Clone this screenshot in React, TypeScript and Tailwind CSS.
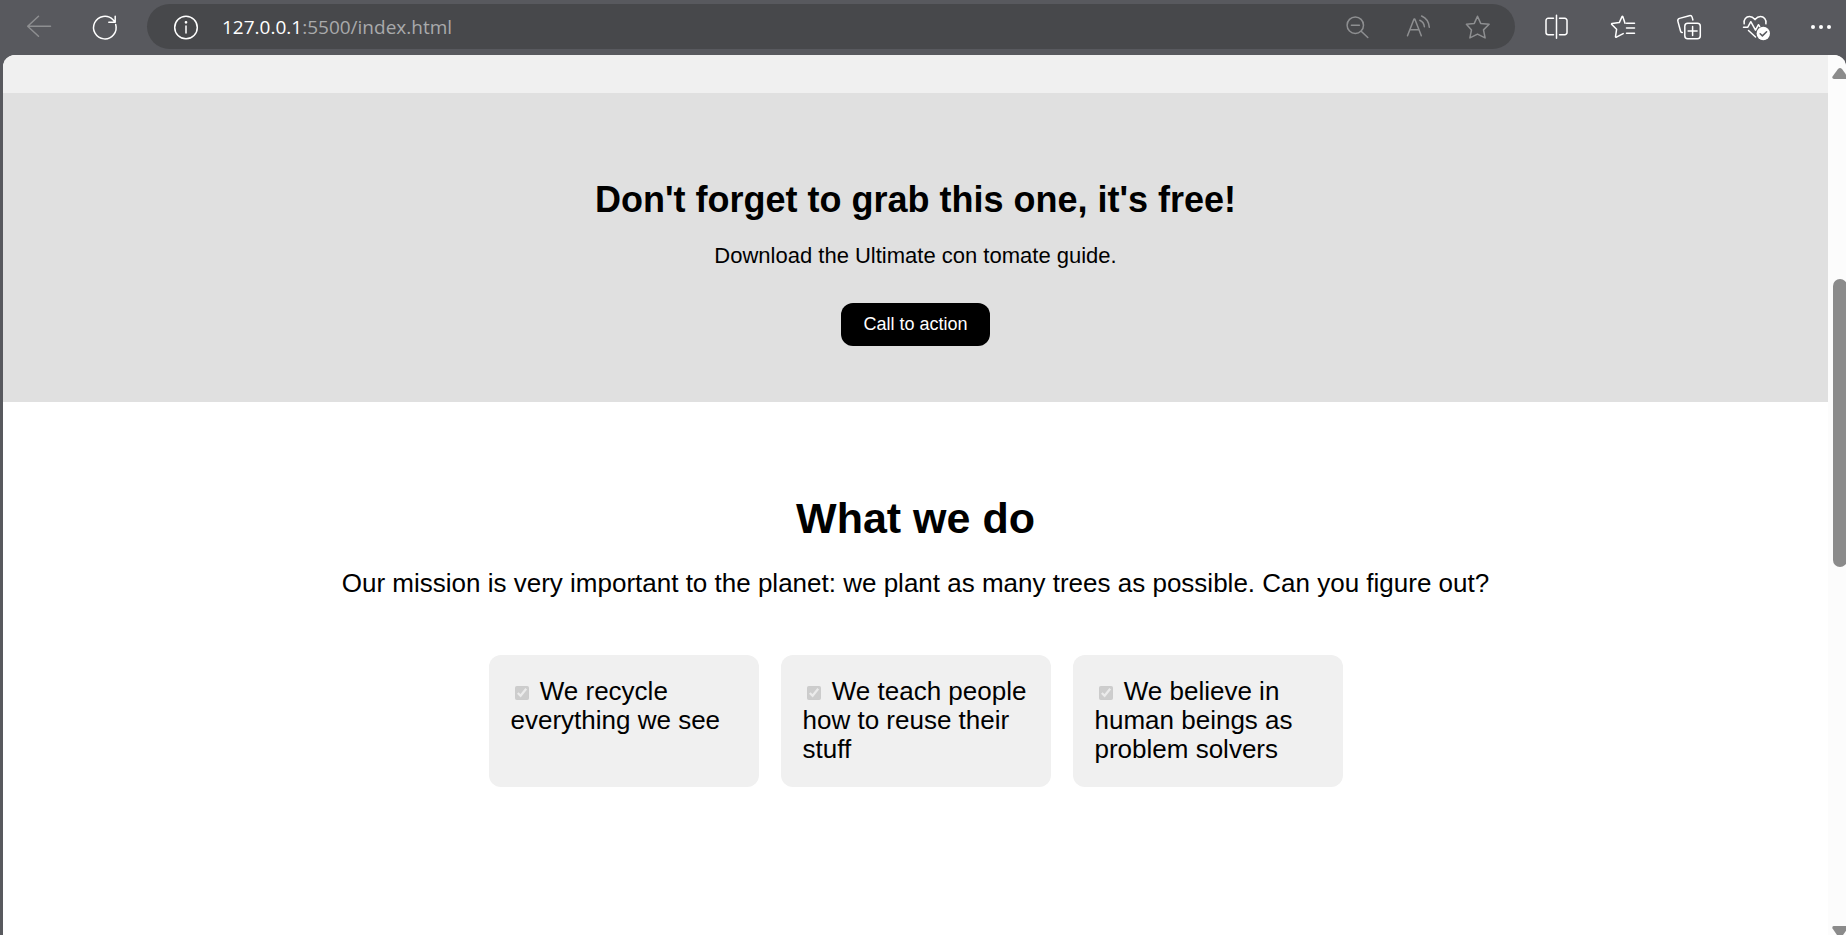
import React from "react";

function Icon({ children }: { children: React.ReactNode }) {
  return (
    <svg
      viewBox="0 0 24 24"
      className="size-6 overflow-visible"
      fill="none"
      stroke="currentColor"
      strokeWidth="1.5"
      strokeLinecap="round"
      strokeLinejoin="round"
      aria-hidden="true"
    >
      {children}
    </svg>
  );
}

function ToolButton({ label, children, dim = false }: { label: string; children: React.ReactNode; dim?: boolean }) {
  return (
    <button type="button" aria-label={label} className={dim ? "shrink-0 text-[#8e8f91]" : "shrink-0 text-white"}>
      <Icon>{children}</Icon>
    </button>
  );
}

function Toolbar() {
  return (
    <header className="flex h-[55px] shrink-0 items-center gap-[30px] bg-[#58595e] pr-[13px] pb-[2px] pl-[27px]">
      <div className="flex gap-[42px]">
        <ToolButton label="Back" dim>
          <path d="M23.5 11.2H.7M11.5 1.2.7 11.2l10.8 10" />
        </ToolButton>
        <ToolButton label="Refresh">
          <path d="M22.7 9.5A11.3 11.3 0 1 1 20 4.8L22 7M22.2 1.2v6h-6.400" />
        </ToolButton>
      </div>

      <div className="flex h-[45px] min-w-0 flex-1 items-center gap-6 rounded-full bg-[#47484b] pr-[25px] pl-[27px]">
        <ToolButton label="Site information">
          <circle cx="12" cy="12.5" r="11.3" />
          <path d="M12 11v7" />
          <circle cx="12" cy="7.3" r=".6" fill="currentColor" />
        </ToolButton>
        <button
          type="button"
          className="min-w-0 flex-1 cursor-text truncate text-left font-['Open_Sans','Noto_Sans',sans-serif] text-[19px] leading-7 text-[#a9aaab]"
        >
          <span className="text-white">127.0.0.1</span>:5500/index.html
        </button>
        <div className="flex gap-9">
          <ToolButton label="Zoom out" dim>
            <circle cx="9.3" cy="10.2" r="8.2" />
            <path d="m15.2 16.2 6.6 6.3M5.4 10.2h8" />
          </ToolButton>
          <ToolButton label="Read aloud" dim>
            <path d="M1.5 20.8 8 4h.8l6.500 16.800M4 14.800h8.800M13.800 5.200c2.800 1.300 4.300 3.600 4.600 6.600M15.600 1c4.600 2 7.300 6 7.700 11.300" />
          </ToolButton>
          <ToolButton label="Add to favorites" dim>
            <path d="m11.5 1.2 3.2 7.2 8.400.9-5.600 5.600 1.600 8-7.600-3.800-7.600 3.800 1.600-8L.4 9.300l7.900-.9z" />
          </ToolButton>
        </div>
      </div>

      <nav aria-label="Browser tools" className="flex gap-[42px]">
        <ToolButton label="Split screen">
          <path d="M11.5.3v22.900M8.500 3.300H3.200A2.200 2.200 0 0 0 1 5.500v12a2.200 2.200 0 0 0 2.200 2.200h5.300M14.500 3.300h5.300A2.200 2.200 0 0 1 22 5.500v12a2.200 2.200 0 0 1-2.200 2.200h-5.300" />
        </ToolButton>
        <ToolButton label="Favorites">
          <path d="M14 8.200 11.800 1.600Q11.400.8 11 1.600L8.300 7.600l-7.200.9q-.9.300-.3 1l4.800 4.800-1.100 7.300q0 1 .9.600l6.800-3.600M15.500 8.200h8M15.500 13h8M15.500 18.200h8" />
        </ToolButton>
        <ToolButton label="Collections">
          <rect x="7.800" y="8.200" width="15.500" height="15.500" rx="3" />
          <path d="M15.600 11.500v9M11.100 16h9M5.300 17.500Q4 17.800 3.600 16.300L.9 6.400Q.3 4.100 2.500 3.400L12.300.7q2.300-.5 2.900 1.700l.7 2.600" />
        </ToolButton>
        <ToolButton label="Browser essentials">
          <path d="M1.200 8.800C.4 4.500 3.200 1.600 6.500 1.600c2.200 0 3.800 1 5.500 3 1.700-2 3.300-3 5.500-3 3.300 0 6.100 2.900 5.400 7.200M.5 12.200h4.300l3-5.500 4.700 8.500 3-5.500 1.200 2M5.500 15.500l7 6.500" />
          <circle cx="20.300" cy="18.500" r="6.700" fill="currentColor" stroke="none" />
          <path d="m17.200 18.800 2.200 2.100 4.200-4.200" stroke="#58595e" />
        </ToolButton>
        <ToolButton label="Settings and more">
          <g fill="currentColor" stroke="none">
            <circle cx="4" cy="12" r="2" />
            <circle cx="12" cy="12" r="2" />
            <circle cx="20" cy="12" r="2" />
          </g>
        </ToolButton>
      </nav>
    </header>
  );
}

function Scrollbar() {
  return (
    <div aria-hidden="true" className="flex w-[18px] shrink-0 flex-col overflow-hidden bg-[#fcfcfc] pt-[13px] pl-1 text-[#8b8b8b]">
      <svg viewBox="0 0 16 11" className="h-[11px] w-4 shrink-0" fill="currentColor">
        <path d="M6 1Q8-.8 10 1l5.5 7.5Q16 11 14 11H2Q-.2 11 .5 8.5z" />
      </svg>
      <div className="flex-[200]" />
      <div className="ml-px w-[14px] flex-[288] rounded-full bg-[#8b8b8b]" />
      <div className="flex-[359]" />
      <svg viewBox="0 0 16 9" className="h-[9px] w-4 shrink-0" fill="currentColor">
        <path d="M2 0h12q2 0 1.500 2.500L11 9H5L.5 2.500Q-.2 0 2 0z" />
      </svg>
    </div>
  );
}

const activities = [
  "We recycle everything we see",
  "We teach people how to reuse their stuff",
  "We believe in human beings as problem solvers",
];

export default function App() {
  return (
    <div className="flex h-screen flex-col overflow-hidden bg-[#58595e] font-['Liberation_Sans',Arial,sans-serif] text-black">
      <Toolbar />
      <div className="ml-[3px] flex min-h-0 flex-1 overflow-hidden rounded-t-xl bg-white">
        <main className="min-w-0 flex-1 overflow-hidden">
          <div className="h-[38px] bg-[#f0f0f0]" />
          <section className="flex flex-col items-center bg-[#e0e0e0] px-6 pt-[87px] pb-14 text-center">
            <h2 className="text-[36px] leading-10 font-bold">Don't forget to grab this one, it's free!</h2>
            <p className="mt-6 text-[22px] leading-6">Download the Ultimate con tomate guide.</p>
            <button type="button" className="mt-[35px] rounded-xl bg-black px-[22px] pt-[11px] pb-3 text-[18px] leading-5 text-white">
              Call to action
            </button>
          </section>
          <section className="flex flex-col items-center px-6 pt-[92px]">
            <h1 className="text-center text-[43px] leading-[48px] font-bold">What we do</h1>
            <p className="mt-[27px] text-center text-[26px] leading-[29px]">
              Our mission is very important to the planet: we plant as many trees as possible. Can you figure out?
            </p>
            <ul className="mt-[57px] flex flex-wrap justify-center gap-[22px]">
              {activities.map((text) => (
                <li key={text} className="w-[270px] rounded-xl bg-[#f0f0f0] px-[22px] pt-[22px] pb-[23px] text-[26px] leading-[29px]">
                  <label>
                    <input type="checkbox" checked disabled readOnly className="mr-1 ml-1 size-[14px]" /> {text}
                  </label>
                </li>
              ))}
            </ul>
          </section>
        </main>
        <Scrollbar />
      </div>
    </div>
  );
}
